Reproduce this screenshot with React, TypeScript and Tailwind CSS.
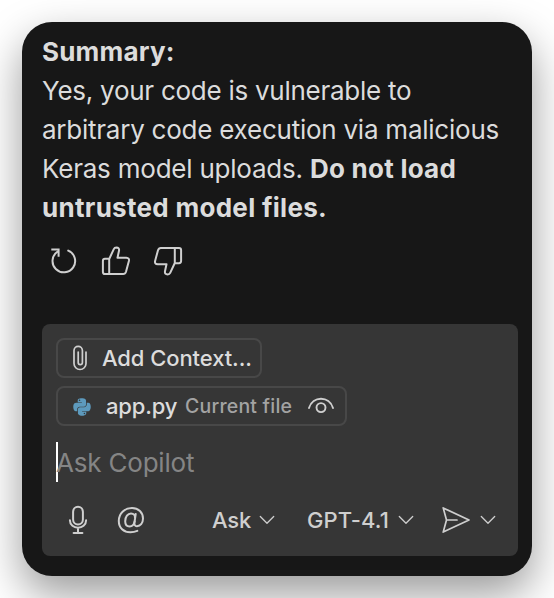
import type { ReactNode } from "react";
import { FaPython } from "react-icons/fa";

function Icon({ children, className = "", width = 2 }: { children: ReactNode; className?: string; width?: number }) {
  return (
    <svg
      viewBox="0 0 32 32"
      className={`size-8 shrink-0 ${className}`}
      fill="none"
      stroke="currentColor"
      strokeWidth={width}
      strokeLinecap="round"
      strokeLinejoin="round"
    >
      {children}
    </svg>
  );
}

function Thumb({ className = "" }: { className?: string }) {
  return (
    <Icon className={className}>
      <path d="M9.2 14 L13.8 4.1 Q14.5 2.6 16.3 2.6 Q19.6 2.7 19 5.8 L17.5 12.8 H26.3 Q29.6 13 28.9 16 L26 26.8 Q25.3 29 23.2 29 H5 Q2.9 29 2.9 26.9 V15.9 Q2.9 13.8 5 13.8 H9.2 V29" />
    </Icon>
  );
}

function Chevron() {
  return (
    <svg viewBox="0 0 16 10" className="h-[10px] w-4 shrink-0" fill="none" stroke="currentColor" strokeWidth={1.3} strokeLinecap="round" strokeLinejoin="round">
      <path d="M1.3 1.5 L8 8.2 L14.7 1.5" />
    </svg>
  );
}

export default function App() {
  return (
    <div className="h-[598px] w-[554px] overflow-hidden bg-white p-[22px] font-['Inter',sans-serif]">
      <div className="flex h-[554px] w-[510px] flex-col rounded-[30px] bg-[#171717] px-5 pt-[10px] text-[#dcdcdc] shadow-[0_18px_44px_rgba(0,0,0,0.4)]">
        <div className="text-[26px] leading-[39px] whitespace-nowrap">
          <div className="font-bold tracking-[0.2px]">Summary:</div>
          <div className="tracking-[-0.26px]">Yes, your code is vulnerable to</div>
          <div className="tracking-[-0.24px]">arbitrary code execution via malicious</div>
          <div className="tracking-[-0.22px]">
            Keras model uploads. <b className="font-bold tracking-[0.25px]">Do not load</b>
          </div>
          <div className="font-bold tracking-[0.29px]">untrusted model files.</div>
        </div>

        <div className="mt-[18px] ml-[6px] flex gap-5 text-[#cfcfcf]">
          <Icon>
            <path d="M4.3 4.5 H10.6 V10.8" strokeLinecap="square" strokeLinejoin="miter" />
            <path d="M9.6 6.6 A11.3 11.3 0 1 0 20.2 5.6" />
          </Icon>
          <Thumb />
          <Thumb className="rotate-180" />
        </div>

        <div className="mt-[47px] flex h-[232px] w-[476px] flex-col items-start rounded-[8px] bg-[#363636] px-[14px] pt-[14px]">
          <div className="flex h-10 w-[206px] items-center rounded-[8px] border-2 border-[#484848]">
            <svg viewBox="0 0 16 28" className="ml-[14px] h-7 w-4 shrink-0" fill="none" stroke="#cfcfcf" strokeWidth={1.7} strokeLinecap="round">
              <path d="M14 8 V19.5 A6 6 0 0 1 2 19.5 V6.6 A4.2 4.2 0 0 1 10.4 6.6 V18.5 A2.1 2.1 0 0 1 6.2 18.5 V8" />
            </svg>
            <span className="ml-[14px] text-[22px] leading-none font-medium tracking-[-0.08px] whitespace-nowrap">Add Context...</span>
          </div>

          <div className="mt-2 flex h-10 w-[291px] items-center rounded-[8px] border-2 border-[#484848] whitespace-nowrap">
            <FaPython className="ml-[14px] mt-px size-5 shrink-0 text-[#5d9abd]" />
            <span className="ml-[14px] w-[71px] text-[22px] leading-none font-medium tracking-[-0.15px]">app.py</span>
            <span className="mt-px ml-2 w-[109px] text-[19.5px] leading-none font-medium tracking-[0.2px] text-[#a3a3a3]">Current file</span>
            <svg viewBox="0 0 28 20" className="ml-[13px] h-5 w-7 shrink-0" fill="none" stroke="#cfcfcf" strokeWidth={1.9} strokeLinecap="round">
              <path d="M2 12 C5.5 -0.4 22.5 -0.4 26 12" />
              <circle cx="14" cy="11.6" r="4.5" />
            </svg>
          </div>

          <div className="mt-4 flex h-10 items-center">
            <div className="-mr-[2px] h-10 w-[2px] bg-white" />
            <span className="mt-[2px] text-[26px] leading-none tracking-[-0.2px] text-[#858585]">Ask Copilot</span>
          </div>

          <div className="mt-[22px] flex h-8 items-center text-[22px] leading-none font-medium whitespace-nowrap text-[#cfcfcf]">
            <Icon className="ml-[6px]">
              <rect x="11.1" y="2.8" width="9.8" height="17.6" rx="4.9" />
              <path d="M7.9 16.2 C7.9 26.2 24.1 26.2 24.1 16.2 M16 24 V29 M11.6 29 H20.4" />
            </Icon>
            <Icon className="ml-[21px]">
              <path d="M20.7 10 L19.6 17.6 C18.9 21 17 22.4 14.6 22.4 C11.9 22.4 10.2 20.3 10.2 17.2 C10.2 12.6 12.8 9.4 16 9.4 C18.7 9.4 20.2 11.4 20 14" />
              <path d="M19.6 17.6 C18.9 21 20.2 22.3 22 22.2 C25.2 22 28 19.2 28 14.6 C28 8.3 23.5 4.1 17 4.1 C9.4 4.1 3.8 9.5 3.8 17 C3.8 24 8.6 28.2 15.4 28.2 C18.4 28.2 20.6 27.6 22.3 26.9" />
            </Icon>
            <span className="ml-[65px] w-[38px] tracking-[-0.2px]">Ask</span>
            <span className="ml-[9px]"><Chevron /></span>
            <span className="ml-8 w-[83px] tracking-[0.1px]">GPT-4.1</span>
            <span className="ml-[8px]"><Chevron /></span>
            <Icon className="ml-[26px]" width={1.7}>
              <path d="M3.2 3.9 L29 16 L3.2 28.1 L6.5 16 Z M6.5 16 H17" />
            </Icon>
            <span className="ml-[8px]"><Chevron /></span>
          </div>
        </div>
      </div>
    </div>
  );
}
